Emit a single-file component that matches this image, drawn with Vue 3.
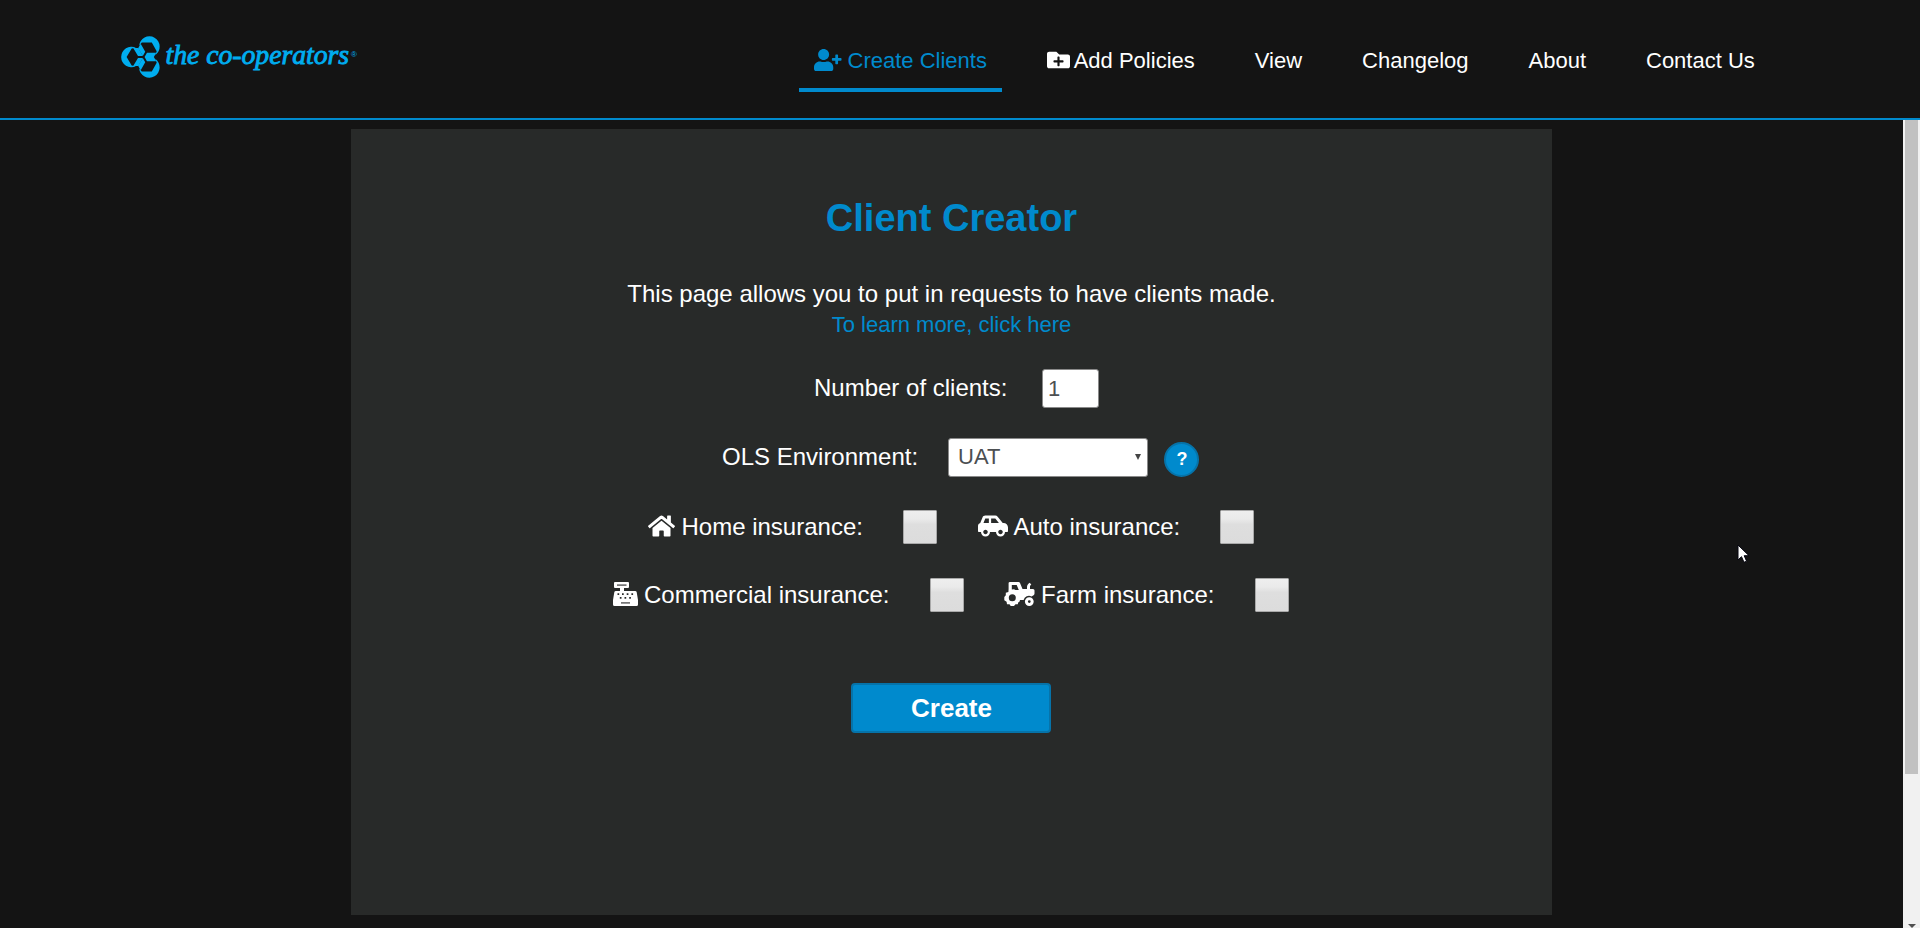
<script setup>
import { ref } from 'vue'

const links = ['View', 'Changelog', 'About', 'Contact Us']
const clients = ref('1')
</script>

<template>
  <div class="page">
    <header class="header">
      <svg class="logo" width="240" height="48" viewBox="0 0 240 48" role="img" aria-label="the co-operators">
        <defs>
          <g id="petal">
            <path d="M-7.500 -9.300A10.300 10.300 0 1 0 -7.500 9.300L-11.700 8.600L-16.800 0L-11.700 -8.600Z" />
            <path d="M-10.200 -9L-5 -9L-.6 -1L-5.400 -1ZM-10.200 9L-5 9L-.6 1L-5.400 1Z" />
          </g>
        </defs>
        <g class="mark" transform="translate(23.4 24)">
          <use href="#petal" />
          <use href="#petal" transform="rotate(120)" />
          <use href="#petal" transform="rotate(240)" />
        </g>
        <text class="brand" x="45.500" y="30.800" textLength="183.500" lengthAdjust="spacingAndGlyphs">the co-operators</text>
        <text class="reg" x="231" y="23.500">®</text>
      </svg>
      <nav class="nav">
        <a class="item active">
          <svg width="27.500" height="22" viewBox="0 0 640 512"><path d="M624 208h-64v-64c0-8.800-7.200-16-16-16h-32c-8.800 0-16 7.200-16 16v64h-64c-8.800 0-16 7.200-16 16v32c0 8.800 7.200 16 16 16h64v64c0 8.800 7.200 16 16 16h32c8.800 0 16-7.200 16-16v-64h64c8.800 0 16-7.200 16-16v-32c0-8.800-7.200-16-16-16zm-400 48c70.700 0 128-57.300 128-128S294.700 0 224 0 96 57.300 96 128s57.300 128 128 128zm89.600 32h-16.700c-22.200 10.200-46.900 16-72.900 16s-50.600-5.800-72.900-16h-16.700C60.200 288 0 348.200 0 422.400V464c0 26.500 21.500 48 48 48h352c26.500 0 48-21.500 48-48v-41.600c0-74.200-60.200-134.400-134.400-134.400z" /></svg>
          <span class="gap">Create Clients</span>
        </a>
        <a class="item">
          <svg width="23" height="22" viewBox="0 0 512 512" preserveAspectRatio="none"><path d="M464 128H272l-64-64H48C21.490 64 0 85.490 0 112v288c0 26.510 21.490 48 48 48h416c26.510 0 48-21.490 48-48V176c0-26.510-21.490-48-48-48zm-96 168c0 8.840-7.160 16-16 16h-72v72c0 8.840-7.160 16-16 16h-16c-8.840 0-16-7.160-16-16v-72h-72c-8.840 0-16-7.160-16-16v-16c0-8.840 7.160-16 16-16h72v-72c0-8.840 7.160-16 16-16h16c8.840 0 16 7.160 16 16v72h72c8.840 0 16 7.160 16 16v16z" /></svg>
          <span class="gap tight">Add Policies</span>
        </a>
        <a v-for="l in links" :key="l" class="item"><span>{{ l }}</span></a>
      </nav>
    </header>

    <div class="body">
      <main class="panel">
        <h1>Client Creator</h1>
        <p class="intro">This page allows you to put in requests to have clients made.</p>
        <a class="more">To learn more, click here</a>

        <div class="row number">
          <span class="label">Number of clients:</span>
          <input v-model="clients" class="box count" type="text" />
        </div>
        <div class="row env">
          <span class="label">OLS Environment:</span>
          <div class="box select"><span>UAT</span><i class="caret"></i></div>
          <button class="help">?</button>
        </div>
        <div class="row home">
          <svg class="icon" width="27" height="24" viewBox="0 0 576 512"><path d="M280.370 148.260L96 300.110V464a16 16 0 0 0 16 16l112.060-.290a16 16 0 0 0 15.920-16V368a16 16 0 0 1 16-16h64a16 16 0 0 1 16 16v95.640a16 16 0 0 0 16 16.050L464 480a16 16 0 0 0 16-16V300L295.670 148.260a12.190 12.190 0 0 0-15.300 0zM571.600 251.470L488 182.560V44.050a12 12 0 0 0-12-12h-56a12 12 0 0 0-12 12v72.610L318.470 43a48 48 0 0 0-61 0L4.340 251.470a12 12 0 0 0-1.600 16.900l25.500 31A12 12 0 0 0 45.150 301l235.220-193.740a12.190 12.190 0 0 1 15.300 0L530.900 301a12 12 0 0 0 16.900-1.600l25.500-31a12 12 0 0 0-1.700-16.930z" /></svg>
          <span class="label l-home">Home insurance:</span>
          <i class="check"></i>
          <svg class="icon second" width="30" height="24" viewBox="0 0 640 512"><path d="M544 192h-16L419.220 56.020A64.025 64.025 0 0 0 369.240 32H155.330c-26.170 0-49.700 15.930-59.420 40.230L48 194.260C20.440 201.400 0 226.210 0 256v112c0 8.840 7.160 16 16 16h48c0 53.020 42.980 96 96 96s96-42.980 96-96h128c0 53.020 42.980 96 96 96s96-42.980 96-96h48c8.840 0 16-7.160 16-16v-80c0-53.020-42.980-96-96-96zM160 432c-26.470 0-48-21.530-48-48s21.530-48 48-48 48 21.530 48 48-21.530 48-48 48zm72-240H116.930l38.400-96H232v96zm48 0V96h89.240l76.800 96H280zm200 240c-26.470 0-48-21.530-48-48s21.530-48 48-48 48 21.530 48 48-21.530 48-48 48z" /></svg>
          <span class="label l-auto">Auto insurance:</span>
          <i class="check"></i>
        </div>
        <div class="row farm">
          <svg class="icon" width="25" height="24" viewBox="0 0 25 24">
            <path fill-rule="evenodd" d="M2 0H15a1 1 0 0 1 1 1V5a1 1 0 0 1-1 1H11V9H22Q23.500 9 23.700 10.300L25 18V22.500Q25 24 23.500 24H1.500Q0 24 0 22.500V18L1.300 10.300Q1.500 9 3 9H7V6H2a1 1 0 0 1-1-1V1a1 1 0 0 1 1-1ZM4.500 11.300V13H6.200V11.300ZM9 11.300V13H10.700V11.300ZM13.700 11.300V13H15.400V11.300ZM18.400 11.300V13H20.100V11.300ZM6.800 15V16.700H8.500V15ZM11.500 15V16.700H13.200V15ZM16.200 15V16.700H17.900V15Z" />
            <path class="slot" d="M4 2.300H13.500V4H4ZM8 20H17V21.700H8Z" />
          </svg>
          <span class="label l-com">Commercial insurance:</span>
          <i class="check"></i>
          <svg class="icon second tractor" width="31" height="24" viewBox="0 0 31 24">
            <path fill-rule="evenodd" d="M6 0H14.500Q15.600 0 16 1L18.500 7H23V5Q23 3.500 24 2.200L25.400 .8L27.300 2.200L26 4V7H29Q30.500 7 30.500 8.500V11.500Q30.500 12.500 29.600 13.200L27.500 14.500A5.500 5.500 0 0 0 19.600 18H16L15.600 19.400L14.200 20.600L13.800 22.300L11.500 22.300L10 24H6.700L5.500 22.300L3 22.300L2.600 19.800L.3 18.300V15L1.800 13.200L1.800 10.700L4.400 9.900L4.600 7V1Q4.600 0 6 0ZM7.800 3V7.600L10 7.300L11.500 8H14.800L12.700 3ZM8.300 12.300A3.500 3.500 0 1 0 8.300 19.300A3.500 3.500 0 1 0 8.300 12.300Z" />
            <path fill-rule="evenodd" d="M25.300 15.200A4.400 4.400 0 1 0 25.300 24A4.400 4.400 0 1 0 25.300 15.200ZM25.300 18.200A1.400 1.400 0 1 1 25.300 21A1.400 1.400 0 1 1 25.300 18.200Z" />
          </svg>
          <span class="label l-farm">Farm insurance:</span>
          <i class="check"></i>
        </div>
        <button class="create">Create</button>
      </main>
      <div class="scroll"><div class="thumb"></div><i class="down"></i></div>
    </div>

    <svg class="cursor" width="13" height="20" viewBox="0 0 13 20"><path d="M1 1V16L4.500 12.700L7 18.300L9.600 17.200L7.200 11.700H12Z" /></svg>
  </div>
</template>

<style>
body {
  margin: 0;
  background: #141414;
  overflow: hidden;
}
</style>

<style scoped>
.page {
  width: 1920px;
  height: 928px;
  position: relative;
  overflow: hidden;
  background: #141414;
  color: #fff;
  font-family: "Liberation Sans", Arial, sans-serif;
}
.page * { box-sizing: border-box; }
.header {
  height: 120px;
  border-bottom: 2px solid #008acd;
  display: flex;
  align-items: flex-start;
}
.logo { margin: 33px 0 0 120px; overflow: visible; }
.mark, .brand, .reg { fill: #00adef; }
.brand {
  font: italic 28px "Liberation Serif", serif;
  stroke: #00adef;
  stroke-width: .9px;
}
.reg { font: 8px "Liberation Sans", sans-serif; }
.nav {
  margin: 29px 0 0 439px;
  display: flex;
  gap: 30px;
}
.item {
  height: 63px;
  padding: 19px 15px 0;
  display: flex;
  font-size: 22px;
  line-height: 26px;
  white-space: nowrap;
}
.item svg { margin-top: 1px; fill: currentColor; }
.gap { margin-left: 6px; }
.gap.tight { margin-left: 3.800px; }
.active { color: #008acd; border-bottom: 4px solid #008acd; }
.body { display: flex; height: 808px; }
.panel {
  width: 1201px;
  height: 786px;
  margin: 9px 351px 0;
  background: #282a29;
  display: flex;
  flex-direction: column;
  align-items: center;
  flex-shrink: 0;
}
h1 {
  margin: 67px 0 0;
  font-size: 38px;
  line-height: 44px;
  color: #008acd;
}
.intro { margin: 40px 0 0; font-size: 24px; line-height: 28px; white-space: nowrap; }
.more { margin-top: 4px; font-size: 22px; line-height: 26px; color: #008acd; }
.row { display: flex; align-self: flex-start; align-items: center; }
.label { font-size: 24px; line-height: 28px; white-space: nowrap; flex-shrink: 0; }
.box {
  height: 39px;
  background: #fff;
  border: 1px solid #8a8a8a;
  border-radius: 3px;
  color: #4c4f52;
  font: 22px "Liberation Sans", Arial, sans-serif;
}
.number { margin: 31px 0 0 463px; height: 39px; }
.number .label { width: 228px; margin-top: -2px; }
.count { width: 57px; padding: 0 5px; }
.env { margin: 30px 0 0 371px; height: 39px; }
.env .label { width: 226px; margin-top: -2px; }
.select {
  width: 200px;
  padding: 0 6px 1px 9px;
  display: flex;
  align-items: center;
  justify-content: space-between;
}
.caret {
  border: 3px solid transparent;
  border-top: 6px solid #444;
  border-bottom: 0;
}
.help {
  margin: 4px 0 0 16px;
  width: 35px;
  height: 35px;
  padding: 0 0 0 1px;
  border: 2px solid #0673a9;
  border-radius: 50%;
  background: #008acd;
  color: #fff;
  font: bold 18px "Liberation Sans", Arial, sans-serif;
}
.home { margin: 33px 0 0 297px; height: 34px; }
.farm { margin: 34px 0 0 262px; height: 34px; }
.icon { fill: #fff; flex-shrink: 0; margin-top: -2px; }
.slot { fill: #777; }
.second { margin-left: 40.500px; }
.second.tractor { margin-left: 40px; }
.l-home { margin-left: 6.500px; width: 221.500px; }
.l-auto { margin-left: 6px; width: 206.500px; }
.l-com { margin-left: 6px; width: 286px; }
.l-farm { margin-left: 6px; width: 214px; }
.check {
  width: 34px;
  height: 34px;
  border: 1px solid #a9a9a9;
  border-radius: 1px;
  background: linear-gradient(#eee 0%, #eaeaea 25%, #dedede 42%, #dcdcdc 100%);
  flex-shrink: 0;
}
.create {
  align-self: flex-start;
  margin: 71px 0 0 500px;
  width: 200px;
  height: 50px;
  padding: 0 0 0 1px;
  border: 2px solid #0673a9;
  border-radius: 4px;
  background: #008acd;
  color: #fff;
  font: bold 26px "Liberation Sans", Arial, sans-serif;
}
.scroll {
  width: 17px;
  height: 808px;
  padding: 0 2px;
  background: #f1f1f1;
  display: flex;
  flex-direction: column;
  justify-content: space-between;
  align-items: center;
}
.thumb { width: 13px; height: 654px; background: #c1c1c1; }
.down {
  border: 4px solid transparent;
  border-top-color: #505050;
  border-bottom: 0;
}
.cursor { position: absolute; left: 1737px; top: 544px; }
.cursor path { fill: #fff; stroke: #050510; stroke-width: 1; }
</style>
